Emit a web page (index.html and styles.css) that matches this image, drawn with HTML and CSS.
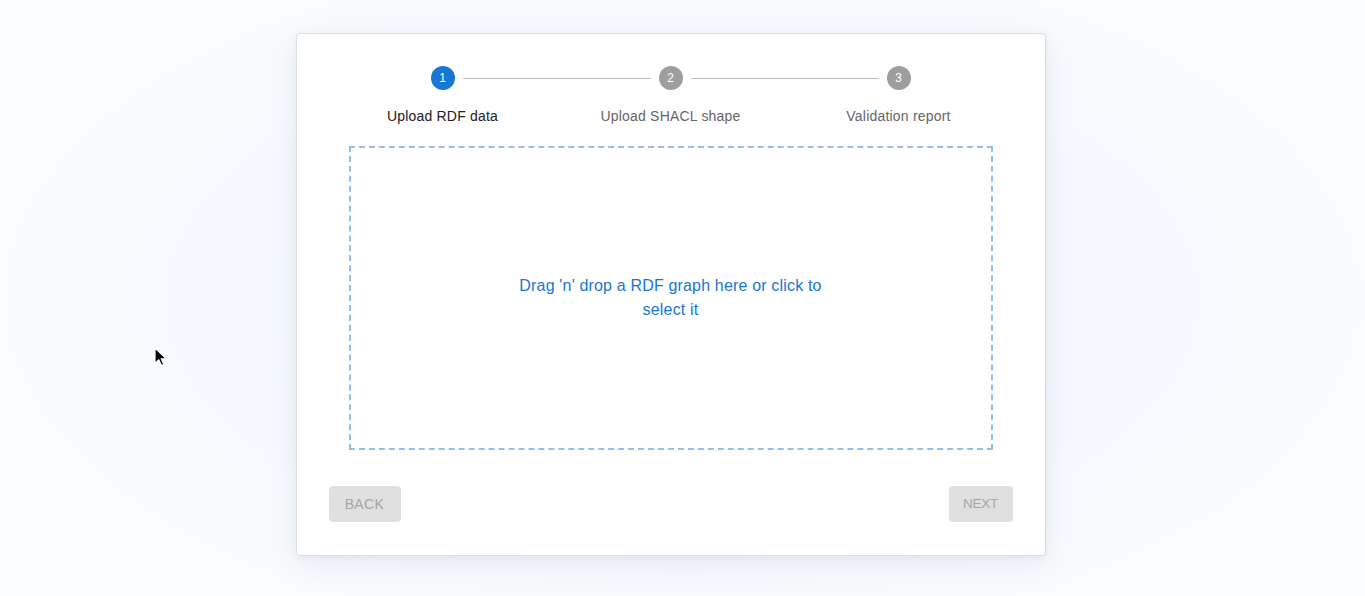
FILE: index.html
```html
<!DOCTYPE html>
<html lang="en">
<head>
<meta charset="utf-8">
<title>SHACL validator</title>
<link rel="stylesheet" href="styles.css">
</head>
<body>
<main class="page">
  <section class="card">
    <ol class="stepper">
      <li class="step active">
        <div class="step-head"><span class="dot">1</span><span class="line right"></span></div>
        <span class="label">Upload RDF data</span>
      </li>
      <li class="step">
        <div class="step-head"><span class="line left"></span><span class="dot">2</span><span class="line right"></span></div>
        <span class="label">Upload SHACL shape</span>
      </li>
      <li class="step">
        <div class="step-head"><span class="line left"></span><span class="dot">3</span></div>
        <span class="label">Validation report</span>
      </li>
    </ol>
    <div class="dropzone">
      <p class="drop-text">Drag 'n' drop a RDF graph here or click to select it</p>
    </div>
    <div class="actions">
      <button class="btn btn-back" disabled>Back</button>
      <button class="btn btn-next" disabled>Next</button>
    </div>
  </section>
</main>
<svg class="cursor" width="14" height="21" viewBox="0 0 14 21" aria-hidden="true">
  <path d="M1 1 L1 16.5 L4.8 12.8 L7.4 18.6 L9.8 17.5 L7.2 11.8 L12.4 11.8 Z" fill="#000" stroke="#fff" stroke-width="1.2" stroke-linejoin="round"/>
</svg>
</body>
</html>
```
FILE: styles.css
```css
* { box-sizing: border-box; }
html, body { margin: 0; height: 100%; }
body {
  font-family: "Liberation Sans", Arial, sans-serif;
  background: radial-gradient(ellipse 60% 70% at 50% 50%, #f2f7fc 0%, #f5f9fd 55%, #fbfcfe 100%);
  min-height: 596px;
}
.page {
  display: flex;
  justify-content: center;
  padding: 33px 24px 0 0;
}
.card {
  width: 750px;
  background: #fff;
  border: 1px solid #dadde1;
  border-radius: 4px;
  box-shadow: 0 8px 28px rgba(120, 140, 170, 0.14), 0 2px 6px rgba(120, 140, 170, 0.08);
  padding: 32px 32px 33px;
}
.stepper {
  list-style: none;
  margin: 0;
  padding: 0;
  display: grid;
  grid-template-columns: repeat(3, 1fr);
}
.step {
  display: flex;
  flex-direction: column;
  align-items: center;
}
.step-head {
  width: 100%;
  height: 24px;
  display: grid;
  grid-template-columns: 1fr 24px 1fr;
  align-items: center;
}
.step:first-child .step-head .dot { grid-column: 2; }
.step:first-child .step-head .line.right { grid-column: 3; }
.step:last-child .step-head .dot { grid-column: 2; }
.line {
  height: 1px;
  background: #bdbdbd;
}
.line.left { margin-right: 8px; }
.line.right { margin-left: 8px; }
.dot {
  width: 24px;
  height: 24px;
  border-radius: 50%;
  background: #9e9e9e;
  color: #fff;
  font-size: 12px;
  display: flex;
  align-items: center;
  justify-content: center;
}
.step.active .dot { background: #1976d2; }
.label {
  margin-top: 16px;
  font-size: 14px;
  line-height: 20px;
  letter-spacing: 0.2px;
  color: #666;
}
.step.active .label { color: #212121; }
.dropzone {
  margin: 20px 20px 36px;
  height: 304px;
  border: 2px dashed #90bff0;
  display: flex;
  align-items: center;
  justify-content: center;
}
.drop-text {
  margin: 0;
  max-width: 330px;
  text-align: center;
  font-size: 16px;
  line-height: 24px;
  letter-spacing: 0.17px;
  color: #1976d2;
}
.actions {
  display: flex;
  justify-content: space-between;
}
.btn {
  font-family: inherit;
  font-size: 14px;
  text-transform: uppercase;
  letter-spacing: 0.4px;
  height: 36px;
  padding: 0 16px;
  min-width: 64px;
  border: none;
  border-radius: 4px;
  background: #e0e0e0;
  color: #a6a6a6;
}
.btn-back {
  width: 72px;
  padding: 0;
}
.btn-next {
  width: 64px;
  padding: 0 0 2px;
  font-size: 13.5px;
  letter-spacing: -0.3px;
}
.cursor {
  position: absolute;
  left: 154px;
  top: 347px;
}
```
